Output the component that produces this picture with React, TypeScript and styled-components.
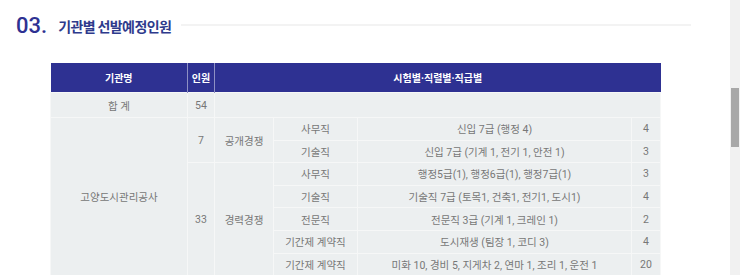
import React from 'react';
import styled, { createGlobalStyle } from 'styled-components';

const GlobalStyle = createGlobalStyle`
  html, body {
    margin: 0;
    padding: 0;
    background: #fff;
    overflow: hidden;
  }
  body {
    font-family: Roboto, "Noto Sans CJK KR", "Noto Sans", sans-serif;
  }
`;

type Row = {
  org?: { text: string; span: number };
  count?: { text: string; span: number };
  exam?: { text: string; span: number };
  series: string;
  detail: string;
  num: string;
};

const rows: Row[] = [
  {
    org: { text: '고양도시관리공사', span: 7 },
    count: { text: '7', span: 2 },
    exam: { text: '공개경쟁', span: 2 },
    series: '사무직',
    detail: '신입 7급 (행정 4)',
    num: '4',
  },
  { series: '기술직', detail: '신입 7급 (기계 1, 전기 1, 안전 1)', num: '3' },
  {
    count: { text: '33', span: 5 },
    exam: { text: '경력경쟁', span: 5 },
    series: '사무직',
    detail: '행정5급(1), 행정6급(1), 행정7급(1)',
    num: '3',
  },
  { series: '기술직', detail: '기술직 7급 (토목1, 건축1, 전기1, 도시1)', num: '4' },
  { series: '전문직', detail: '전문직 3급 (기계 1, 크레인 1)', num: '2' },
  { series: '기간제 계약직', detail: '도시재생 (팀장 1, 코디 3)', num: '4' },
  { series: '기간제 계약직', detail: '미화 10, 경비 5, 지게차 2, 연마 1, 조리 1, 운전 1', num: '20' },
];

const Page = styled.div`
  padding: 0 0 0 16px;
  width: 714px;
`;

const TitleRow = styled.div`
  display: flex;
  align-items: center;
  height: 50px;
`;

const Number = styled.span`
  font-family: Roboto, "Liberation Sans", sans-serif;
  font-size: 22px;
  font-weight: 500;
  color: #2e3192;
`;

const Title = styled.h2`
  margin: 2px 0 0 11px;
  font-family: "Noto Sans CJK KR", sans-serif;
  font-size: 14px;
  font-weight: 700;
  color: #2e3a8c;
  letter-spacing: -0.6px;
`;

const TitleLine = styled.div`
  margin-left: 10px;
  width: 510px;
  height: 2px;
  background: #f3f3f3;
`;

const Table = styled.table`
  margin: 13px 0 0 34px;
  width: 610px;
  border-collapse: collapse;
  table-layout: fixed;
`;

const Th = styled.th`
  height: 29px;
  padding: 0;
  background: #2e3192;
  color: #fff;
  font-size: 10px;
  font-weight: 700;
  border-left: 1px solid #8e90c4;
  &:first-child {
    border-left: none;
  }
`;

const Td = styled.td<{ $tall?: boolean }>`
  height: ${(p) => (p.$tall ? '24px' : '21.6px')};
  padding: 0;
  background: #eceff0;
  color: #777;
  font-size: 10.5px;
  text-align: center;
  border: 1px solid #f6f7f7;
  white-space: nowrap;
`;

const ScrollTrack = styled.div`
  position: fixed;
  top: 0;
  right: 0;
  width: 10px;
  height: 100%;
  background: #f1f1f1;
`;

const ScrollThumb = styled.div`
  position: absolute;
  top: 88px;
  left: 1px;
  width: 8px;
  height: 59px;
  background: #a8a8a8;
`;

export default function App() {
  return (
    <>
      <GlobalStyle />
      <Page>
        <TitleRow>
          <Number>03.</Number>
          <Title>기관별 선발예정인원</Title>
          <TitleLine />
        </TitleRow>
        <Table>
          <colgroup>
            <col style={{ width: 137 }} />
            <col style={{ width: 27 }} />
            <col style={{ width: 59 }} />
            <col style={{ width: 84 }} />
            <col style={{ width: 274 }} />
            <col style={{ width: 29 }} />
          </colgroup>
          <thead>
            <tr>
              <Th>기관명</Th>
              <Th>인원</Th>
              <Th colSpan={4}>시험별·직렬별·직급별</Th>
            </tr>
          </thead>
          <tbody>
            <tr>
              <Td $tall>합 계</Td>
              <Td $tall>54</Td>
              <Td $tall colSpan={4} />
            </tr>
            {rows.map((r, i) => (
              <tr key={i}>
                {r.org && <Td rowSpan={r.org.span}>{r.org.text}</Td>}
                {r.count && <Td rowSpan={r.count.span}>{r.count.text}</Td>}
                {r.exam && <Td rowSpan={r.exam.span}>{r.exam.text}</Td>}
                <Td>{r.series}</Td>
                <Td>{r.detail}</Td>
                <Td>{r.num}</Td>
              </tr>
            ))}
          </tbody>
        </Table>
      </Page>
      <ScrollTrack>
        <ScrollThumb />
      </ScrollTrack>
    </>
  );
}
